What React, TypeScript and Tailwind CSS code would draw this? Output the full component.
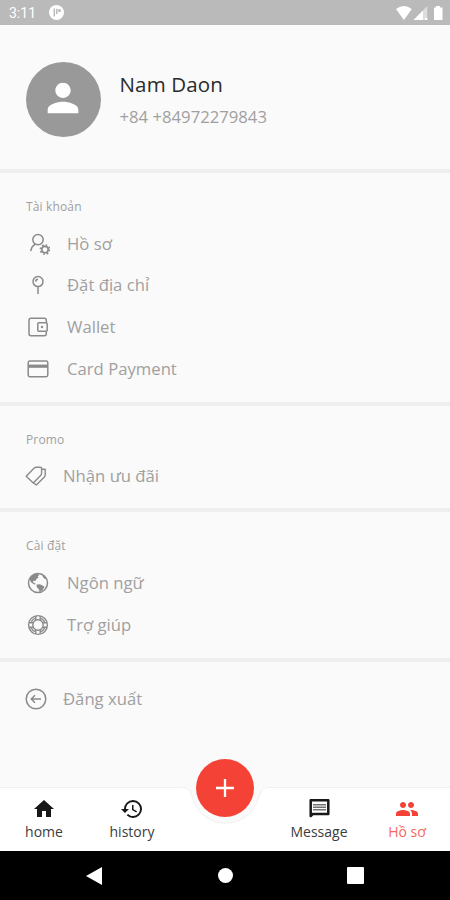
import React from "react";
import { MdHome, MdHistory, MdPeople, MdPerson } from "react-icons/md";

function Glyph({ children, className = "" }: { children: React.ReactNode; className?: string }) {
  return (
    <svg viewBox="0 0 24 24" className={`size-6 shrink-0 ${className}`} fill="none" stroke="#8a8a8a" strokeWidth="1.5">
      {children}
    </svg>
  );
}

const ProfileGear = () => (
  <Glyph>
    <circle cx="12" cy="7.6" r="5.2" />
    <path d="M9.3 12.2C6.6 13.4 5.3 15.6 4.7 19.2" />
    <circle cx="19" cy="17.6" r="3.2" strokeWidth="1.6" />
    <circle cx="19" cy="17.6" r="4.6" strokeWidth="1.7" strokeDasharray="1.7 1.913" />
  </Glyph>
);

const Pin = () => (
  <Glyph>
    <circle cx="12" cy="8.6" r="5" />
    <path d="M12 13.6V21M9.7 8.6A2.4 2.4 0 0 1 12 6.3" />
  </Glyph>
);

const Wallet = () => (
  <Glyph>
    <path d="M20.3 7.6V5.3Q20.3 3.3 18.3 3.3H5Q3 3.3 3 5.3V18.7Q3 20.7 5 20.7H18.3Q20.3 20.7 20.3 18.7V16.4" />
    <rect x="11.8" y="7.8" width="9.4" height="8.4" rx="1" />
    <circle cx="16" cy="12" r="1.2" fill="#8a8a8a" stroke="none" />
  </Glyph>
);

const Card = () => (
  <Glyph>
    <rect x="2.2" y="4" width="19.6" height="15.8" rx="1.7" />
    <path d="M2.2 9.2H21.8" strokeWidth="3.2" />
  </Glyph>
);

const Tags = () => (
  <Glyph>
    <path d="M2.2 12.2L10.2 4.1Q11 3.2 12.2 3.2H16.4Q17.6 3.2 17.6 4.4V9.3Q17.6 10.5 16.8 11.3L9.3 19Z" strokeWidth="1.4" strokeLinejoin="round" />
    <path d="M17.6 5.2H21.2V11Q21.2 12.1 20.4 12.9L12.3 21L9.7 19" strokeWidth="1.4" strokeLinejoin="round" />
  </Glyph>
);

const Globe = () => (
  <Glyph>
    <circle cx="12" cy="12" r="9.5" strokeWidth="1.5" />
    <path d="M3.4 8.6C4.6 5.2 7.6 2.9 11.5 2.7L13.2 4.3L11.7 5.4L12.6 6.5L10.4 8L9.5 10L7.6 9.7L6.8 11L9.6 12.8L8.9 13.8L5.5 11.7ZM17 3.8L20.8 8.4L18.5 7.7L16.6 5.7ZM10.6 13.6L14 13.3L18.4 15.6L16.9 18.8L13.5 21.1L13 18.4L10.7 16.1Z" fill="#8a8a8a" stroke="none" />
  </Glyph>
);

const Lifebuoy = () => (
  <Glyph className="[&_*]:stroke-[1.4]">
    <circle cx="12" cy="12" r="9.4" />
    <circle cx="12" cy="12" r="5.2" />
    <circle cx="12" cy="12" r="7.3" strokeDasharray="5.73 5.73" strokeDashoffset="-2.87" />
    <path d="M9.8 3V7.2M14.2 3V7.2M9.8 16.8V21M14.2 16.8V21M3 9.8H7.2M3 14.2H7.2M16.8 9.8H21M16.8 14.2H21" />
  </Glyph>
);

const Logout = () => (
  <Glyph>
    <circle cx="12" cy="12" r="9.8" />
    <path d="M17 12H7.5M11 8.3L7.3 12L11 15.7" />
  </Glyph>
);

const MessageIcon = () => (
  <svg viewBox="0 0 24 24" className="size-6" fill="none" stroke="currentColor">
    <path d="M3.7 19V3.2H21.3V17H5.7Z" strokeWidth="2.5" strokeLinejoin="round" />
    <path d="M6 7.7H19M6 10.2H19M6 12.7H19" strokeWidth="1.4" opacity=".6" />
  </svg>
);

function Row({ icon, label, near }: { icon: React.ReactNode; label: string; near?: boolean }) {
  return (
    <div className={`flex h-[41.6px] items-center ${near ? "gap-[15px] pl-6" : "gap-[17px] pl-[26px]"}`}>
      {icon}
      <span className="whitespace-nowrap text-[16.7px] leading-6 text-[#a0a0a0]">{label}</span>
    </div>
  );
}

const Title = ({ children }: { children: string }) => (
  <h2 className="pl-[26px] text-[12px] leading-4 tracking-[0.15px] text-[#a0a0a0]">{children}</h2>
);

function Tab({ icon, label, active }: { icon: React.ReactNode; label: string; active?: boolean }) {
  return (
    <div className={`flex w-[88px] flex-col items-center pt-[10px] ${active ? "text-[#f44336]" : "text-[#181818]"}`}>
      {icon}
      <span className={`mt-px text-[14px] leading-5 ${active ? "text-[#f6665c]" : "text-[#3c3c3c]"}`}>{label}</span>
    </div>
  );
}

export default function App() {
  return (
    <div className="flex h-[900px] w-[450px] flex-col overflow-hidden bg-[#fafafa] font-['Open_Sans','Noto_Sans',sans-serif]">
      <header className="flex h-[25px] shrink-0 items-center bg-[#bababa] pl-[9px] text-white">
        <span className="w-10 font-[Roboto,sans-serif] text-[14px] leading-4">3:11</span>
        <svg viewBox="0 0 16 16" className="mt-[1px] size-4">
          <circle cx="7.5" cy="7.5" r="7.5" fill="white" />
          <path d="M5.3 3.5V11.5M7.8 3.8V9" stroke="#bababa" strokeWidth="1.5" fill="none" />
          <circle cx="10.5" cy="5.6" r="1.5" fill="#bababa" />
        </svg>
        <svg viewBox="0 0 50 18" className="ml-auto mr-1 h-[18px] w-[50px]" fill="white">
          <path d="M0 5Q7.8-1 15.8 5L7.9 16Z" />
          <path d="M17.5 16L31.3 2V16Z" fillOpacity=".5" />
          <path d="M17.5 16L27 6.4V16ZM29 14H31.3V16H29Z" />
          <path d="M40 2H44V3.5H46.5V16H38V3.5H40Z" />
        </svg>
      </header>

      <section className="flex h-[144px] shrink-0 items-start pl-[25.5px] pt-[36.5px]">
        <div className="flex size-[75px] items-center justify-center rounded-full bg-[#999]">
          <MdPerson className="-mt-[3px] size-[46px] text-white" />
        </div>
        <div className="ml-[19px] pt-[7px]">
          <h1 className="text-[20.5px] leading-[30px] tracking-[0.15px] text-[#2b2b2b]">Nam Daon</h1>
          <p className="mt-[6px] text-[16.7px] leading-6 text-[#a0a0a0]">+84 +84972279843</p>
        </div>
      </section>
      <section className="h-[233px] shrink-0 border-t-[4px] border-[#eeeeee] pt-[26px]">
        <Title>Tài khoản</Title>
        <div className="pt-[8px]">
          <Row icon={<ProfileGear />} label="Hồ sơ" />
          <Row icon={<Pin />} label="Đặt địa chỉ" />
          <Row icon={<Wallet />} label="Wallet" />
          <Row icon={<Card />} label="Card Payment" />
        </div>
      </section>
      <section className="h-[106px] shrink-0 border-t-[4px] border-[#eeeeee] pt-[26px]">
        <Title>Promo</Title>
        <div className="pt-[7px]"><Row near icon={<Tags />} label="Nhận ưu đãi" /></div>
      </section>
      <section className="h-[150px] shrink-0 border-t-[4px] border-[#eeeeee] pt-[26px]">
        <Title>Cài đặt</Title>
        <div className="pt-[8.4px]">
          <Row icon={<Globe />} label="Ngôn ngữ" />
          <Row icon={<Lifebuoy />} label="Trợ giúp" />
        </div>
      </section>
      <section className="flex-1 border-t-[4px] border-[#eeeeee] pt-[16px]">
        <Row near icon={<Logout />} label="Đăng xuất" />
      </section>

      <nav className="relative flex h-16 shrink-0 justify-between">
        <svg viewBox="0 0 450 64" className="absolute inset-0 h-16 w-[450px] overflow-hidden">
          <path d="M-2 .5H181C189 .5 190 4 192.5 11C198 27 210 36 225.5 36C241 36 253 27 258.5 11C261 4 262 .5 270 .5H452V66H-2Z" fill="white" stroke="#f0f0f0" strokeWidth="1" />
        </svg>
        <div className="relative flex">
          <Tab icon={<MdHome className="size-6" />} label="home" />
          <Tab icon={<MdHistory className="size-6" />} label="history" />
        </div>
        <button className="absolute left-1/2 top-[-28.5px] flex size-[58px] -translate-x-1/2 items-center justify-center rounded-full bg-[#f44336]">
          <svg viewBox="0 0 18 18" className="size-[18px]"><path d="M9 0V18M0 9H18" stroke="white" strokeWidth="2.3" /></svg>
        </button>
        <div className="relative -mr-px flex">
          <Tab icon={<MessageIcon />} label="Message" />
          <Tab active icon={<MdPeople className="size-6" />} label="Hồ sơ" />
        </div>
      </nav>
      <footer className="flex h-[49px] shrink-0 items-center justify-between bg-black pl-[86px] pr-[86px]">
        <svg viewBox="0 0 17 18" className="h-[18px] w-[17px]"><path d="M0 9L16 0V18Z" fill="white" /></svg>
        <span className="size-[15px] rounded-full bg-white" />
        <span className="size-[17px] rounded-[1px] bg-white" />
      </footer>
    </div>
  );
}
